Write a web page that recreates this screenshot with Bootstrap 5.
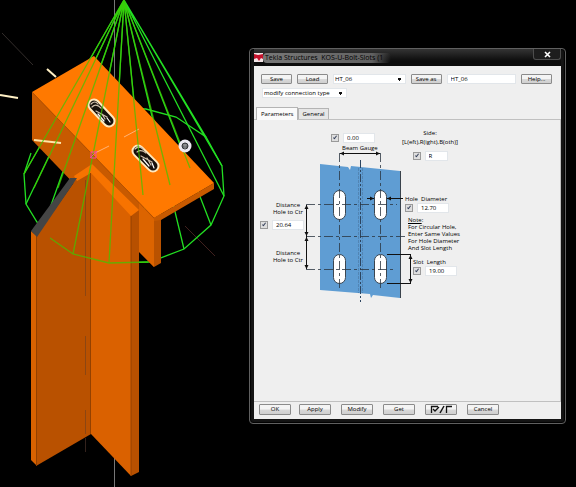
<!DOCTYPE html>
<html lang="en">
<head>
<meta charset="utf-8">
<meta name="viewport" content="width=device-width, initial-scale=1">
<title>Tekla Structures KOS-U-Bolt-Slots</title>
<link href="https://cdn.jsdelivr.net/npm/bootstrap@5.3.0/dist/css/bootstrap.min.css" rel="stylesheet">
<style>
body { background: #000; font-family: "Open Sans", "Noto Sans", sans-serif; font-size: 6px; line-height: 7px; color: #000; }
.scene { flex: 0 0 249px; min-width: 0; }
.win { margin: 48px 10px 0 0; padding: 0 4px 4px; background: #141414; border: 1px solid #606060; border-radius: 4px; box-shadow: inset 0 0 1px 1px #000; min-width: 0; }
.win-title { height: 17px; background: linear-gradient(#343434, #0c0c0c 70%); }
.win-title h1 { font-size: 7px; line-height: 10px; padding: 0 8px 0 2px; color: #000; background: linear-gradient(90deg, #777, #626262 85%, transparent); border-radius: 4px; font-weight: 400; }
.win-close { width: 28px; height: 11px; border: 1px solid #4d4d4d; border-top: 0; border-radius: 0 0 3px 3px; background: #1d1d1d; }
.win-close svg { display: block; margin: 0 auto; }
.win-body { background: #efefef; }
.push { height: 10px; border: 1px solid #8b8b8b; border-radius: 1px; padding: 0; line-height: 7px; font-size: 6px; color: #000; background: linear-gradient(#f4f4f4 45%, #d8d8d8 55%, #cfcfcf); width: 32px; }
.push-row { gap: 5px; padding: 8px 9px 0 7px; }
.push-row .push { width: 31px; }
.field, .picker { border: 1px solid #e2e6ea; background-color: #fff; color: #000; font-size: 6px; line-height: 8px; height: 10px; padding: 0 3px; border-radius: 0; min-width: 0; }
.field-sm { width: 32px; }
.field-xs { width: 23px; }
.picker { appearance: none; padding: 0 1px; background-image: conic-gradient(from -37deg at 50% 100%, #111 74deg, transparent 0); background-size: 5px 3px; background-position: right 3px center; background-repeat: no-repeat; }
.w-type { width: 85px; }
.tick { appearance: none; width: 8px; height: 8px; margin: 0; border: 1px solid #9a9a9a; background: #dedede; flex: none; }
.tick:checked::after { content: ""; display: block; margin: 0 0 0 2px; width: 2px; height: 4px; border: solid #38425c; border-width: 0 1px 1px 0; transform: rotate(38deg); }
.tabs { padding: 9px 0 0 2px; }
.tab-btn { border: 1px solid #b4b4b4; border-bottom: 0; background: #e6e6e6; padding: 1px 3px 0; font-size: 6px; line-height: 9px; color: #000; }
.tab-btn.active { background: #fafafa; padding: 2px 4px 1px; margin-bottom: -1px; }
.sheet { border: 1px solid #c0c0c0; border-left: 0; min-height: 283px; }
.col-left { width: 50px; padding-top: 82px; }
.col-left .cap { width: 32px; text-align: center; white-space: nowrap; }
.col-mid { width: 97px; padding-top: 13px; }
.col-mid .gauge { padding-left: 27px; }
.col-mid .gauge label { padding: 2px 0 0 11px; }
.col-mid svg { display: block; overflow: visible; }
.col-right { padding-top: 9px; white-space: nowrap; }
.side { width: 58px; line-height: 9px; }
.side span { display: block; margin: 0 -5px; }
.hole { padding: 35px 0 0 4px; }
.note { padding: 4px 0 0 7px; }
.slot { padding: 7px 0 0 12px; }
.foot { padding: 2px 5px 4px; gap: 10px; }
.foot .push { height: 11px; }
</style>
</head>
<body>
<main class="d-flex align-items-start">
<svg class="scene" viewBox="0 0 249 487" role="img" aria-label="3D view of a bolted beam connection">
  <path d="M2 33 33 65" stroke="#332d2b"/>
  <path d="M114.500 0V90M114.500 455V487" stroke="#777"/>
  <path d="M185 226 215 256" stroke="#40201e"/>
  <path d="M0 95 18 98M47 69 56 77" stroke="#fff0c4" stroke-width="2"/>
  <g fill="none" stroke="#22df22" stroke-width="1.300">
    <path d="M124 0 24 174M124 0 26 204M124 0 50 208M124 0 73 254M124 0 109 263M124 0 150 262M124 0 184 249M124 0 211 225M124 0 224 196M124 0 222 166M124 0 206 137"/>
    <path d="M31 153 24 174 26 204 37 222 50 238 73 254 109 263 150 262 184 249 211 225 224 196 222 166 206 137 176 117 146 109 110 108"/>
  </g>
  <path d="M32 92 154 218V267L32 140Z" fill="#c85a00"/>
  <path d="M139 203 154 219V267L139 252Z" fill="#dc6400"/>
  <path d="M154 218 161 214V263L154 267Z" fill="#b95200"/>
  <path d="M154 218 214 183V189L161 220 154 221Z" fill="#c85a00"/>
  <path d="M32 92 94 56 214 183 154 218Z" fill="#ff7900"/>
  <path d="M32 92 154 218" stroke="#b85200" stroke-width=".7"/>
  <path d="M31 231 37 236V466L31 460Z" fill="#d96200"/>
  <path d="M36 236 77 178 91 172V434L36 466Z" fill="#b95100"/>
  <path d="M91 172 131 214V476L91 434Z" fill="#da6100"/>
  <path d="M131 214 139 210V472L131 476Z" fill="#b75000"/>
  <path d="M74 176 92 164 139 210 131 216 91 173 77 181Z" fill="#f77300"/>
  <path d="M36.500 236V466M90.500 173V434M131 216V476" stroke="#8a3d00" stroke-width=".8"/>
  <path d="M85.500 180V296M85.500 336V375M85.500 410V434" stroke="#8c4612"/>
  <path d="M85.500 438V452" stroke="#33221c"/>
  <path d="M31 231 70 178 77 178 37 237Z" fill="#454545"/>
  <path d="M34 140 61 143" stroke="#ffe6a8" stroke-width="2"/>
  <path d="M95 153 109 146M124 137 139 129" stroke="#ffb377"/>
  <g stroke-linecap="round">
    <path d="M94 105 109 121M138 151 153 166" stroke="#ffe8be" stroke-width="13"/>
    <path d="M94 105 109 121M138 151 153 166" stroke="#16100c" stroke-width="9"/>
    <path d="M91 104q4-4 7 0M92 107q4-4 9 1M96 111 107 117M102 114 105 119M135 149q4-4 8 0M137 152q4-3 9 1M141 156 152 162M147 158 151 165" fill="none" stroke="#cdbda9" stroke-width="1.200"/>
    <path d="M98 114 104 121M107 118 110 122M143 159 149 166M152 163 154 168" stroke="#fff" stroke-width="1.200"/>
  </g>
  <g fill="none" stroke="#3fc800" stroke-width="1.300" opacity=".72">
    <path d="M124 0 24 174M124 0 34 188M124 0 58 188M124 0 73 254M124 0 109 263M124 0 143 195M124 0 170 185M124 0 190 168"/>
    <path d="M50 238 73 254 109 263 148 262"/>
  </g>
  <path d="M91 152h5v6h-5zM90 158l7-7" fill="none" stroke="#f0489c"/>
  <circle cx="185" cy="146" r="6.500" fill="#ece9f2"/>
  <circle cx="185" cy="146" r="3" fill="#66686e" stroke="#34363a"/>
  <path d="M183 145h4M185 144v5" stroke="#aaa" stroke-width=".7"/>
</svg>

<section class="win flex-fill">
  <header class="win-title d-flex align-items-center">
    <svg class="flex-shrink-0" width="9" height="9" viewBox="0 0 9 9" aria-hidden="true"><rect width="9" height="9" fill="#f3e6e8"/><path d="M0 1 4 2 9 1V6L7 5 5 8 3 5 0 6Z" fill="#c4122c"/></svg>
    <h1 class="mb-0 text-nowrap">Tekla Structures &nbsp;KOS-U-Bolt-Slots (1</h1>
    <button type="button" class="win-close ms-auto align-self-start p-0" aria-label="Close"><svg width="7" height="7" viewBox="0 0 7 7"><path d="M1 1 6 6M6 1 1 6" stroke="#fff" stroke-width="1.600"/></svg></button>
  </header>
  <div class="win-body">
    <div class="push-row d-flex align-items-center">
      <button type="button" class="push">Save</button>
      <button type="button" class="push">Load</button>
      <select class="picker flex-fill" aria-label="Saved settings"><option>HT_06</option></select>
      <button type="button" class="push">Save as</button>
      <input class="field flex-fill" size="1" value="HT_06" aria-label="Save as name">
      <button type="button" class="push">Help...</button>
    </div>
    <div class="d-flex ps-2 pt-1"><select class="picker w-type" aria-label="Connection type"><option>modify connection type</option></select></div>
    <div class="tabs d-flex align-items-end" role="tablist">
      <button type="button" class="tab-btn active" role="tab" aria-selected="true">Parameters</button>
      <button type="button" class="tab-btn" role="tab" aria-selected="false">General</button>
    </div>
    <div class="sheet d-flex" role="tabpanel">
      <div class="col-left d-flex flex-column align-items-end">
        <label class="cap" for="dist">Distance<br>Hole to Ctr</label>
        <div class="d-flex align-items-center gap-1 my-1">
          <input type="checkbox" class="tick" checked aria-label="Use distance"><input id="dist" class="field field-sm" value="20.64">
        </div>
        <div class="cap pt-3">Distance<br>Hole to Ctr</div>
      </div>
      <div class="col-mid">
        <div class="gauge">
          <div class="d-flex align-items-center gap-1"><input type="checkbox" class="tick" checked aria-label="Use beam gauge"><input id="gauge" class="field field-sm" value="0.00"></div>
          <label for="gauge" class="d-block text-nowrap">Beam Gauge</label>
        </div>
        <svg width="97" height="150" viewBox="304 153 97 150" aria-hidden="true">
          <path d="M320 165 348 168 350 171 351 167 400 172V299L373 296 371 299 370 295 320 291Z" fill="#5f9dd3"/>
          <path d="M400.500 172V299" stroke="#39424b"/>
          <path d="M358.500 169V294M362.500 169V294" stroke="#4d7ba6" stroke-dasharray="3 1" stroke-width=".7"/>
          <path d="M360.500 161V303" stroke="#2c4560" stroke-dasharray="8 2 2 2"/>
          <g fill="#fff" stroke="#3b4651">
            <rect x="333.500" y="191.500" width="12" height="29" rx="6"/><rect x="374.500" y="191.500" width="12" height="29" rx="6"/>
            <rect x="333.500" y="255.500" width="12" height="29" rx="6"/><rect x="374.500" y="255.500" width="12" height="29" rx="6"/>
          </g>
          <path d="M339.500 154V292M380.500 154V292M306 205.500H397M306 237.500H407M306 270.500H394" stroke="#2b3641" stroke-dasharray="9 3 3 3" stroke-width=".8"/>
          <path d="M340 154.500H380M306.500 206V270M367 199.500H374M387 199.500H403M387 255.500H411M387 284.500H411M410.500 256V284" stroke="#111"/>
          <path d="M340 154.500l4-2v4zM380 154.500l-4-2v4zM306.500 206l-2 4h4zM306.500 237l-2-4h4zM306.500 238l-2 4h4zM306.500 270l-2-4h4zM374 199.500l-4-2v4zM387 199.500l4-2v4zM410.500 256l-2 4h4zM410.500 284l-2-4h4z" fill="#111"/>
        </svg>
      </div>
      <div class="col-right">
        <div class="side text-center">
          <label class="d-block" for="side">Side:<span>[L(eft),R(ight),B(oth)]</span></label>
          <div class="d-flex align-items-center justify-content-center pt-1"><input type="checkbox" class="tick me-1" checked aria-label="Use side"><input id="side" class="field field-xs" value="R"></div>
        </div>
        <div class="hole">
          <label class="d-block" for="diam">Hole &nbsp;Diameter</label>
          <div class="d-flex align-items-center gap-1"><input type="checkbox" class="tick" checked aria-label="Use hole diameter"><input id="diam" class="field field-sm" value="12.70"></div>
        </div>
        <div class="note"><u>Note</u>:<br>For Circular Hole,<br>Enter Same Values<br>For Hole Diameter<br>And Slot Length</div>
        <div class="slot">
          <label class="d-block" for="slot">Slot &nbsp;Length</label>
          <div class="d-flex align-items-center gap-1"><input type="checkbox" class="tick" checked aria-label="Use slot length"><input id="slot" class="field field-sm" value="19.00"></div>
        </div>
      </div>
    </div>
    <footer class="foot d-flex">
      <div class="d-flex gap-1"><button type="button" class="push me-1">OK</button><button type="button" class="push">Apply</button></div>
      <button type="button" class="push">Modify</button>
      <button type="button" class="push">Get</button>
      <button type="button" class="push" aria-label="Toggle all"><svg class="d-block mx-auto" width="26" height="9" viewBox="0 0 26 9" fill="none" stroke="#111"><path d="M3.500 8V1.500H10M18.500 8V1.500H24M5 4l2 2 4-4" stroke-width="1.300"/><path d="M12 8 16 1" stroke-width="1.500"/></svg></button>
      <button type="button" class="push">Cancel</button>
    </footer>
  </div>
</section>
</main>
<script src="https://cdn.jsdelivr.net/npm/bootstrap@5.3.0/dist/js/bootstrap.bundle.min.js"></script>
</body>
</html>
